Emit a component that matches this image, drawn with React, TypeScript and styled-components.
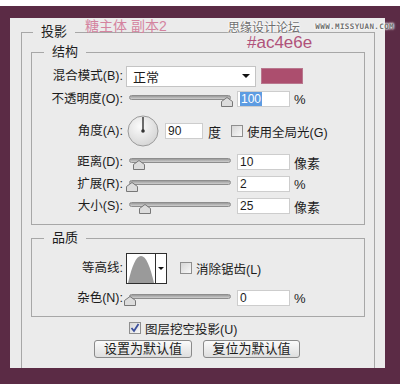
import React from "react";
import styled, { createGlobalStyle } from "styled-components";

const GlobalStyle = createGlobalStyle`
  html, body { margin: 0; padding: 0; }
  body {
    background: #5b2b45;
    font-family: "Liberation Sans", "Noto Sans CJK SC", sans-serif;
  }
`;

const Page = styled.div`
  position: relative;
  width: 400px;
  height: 384px;
  box-sizing: border-box;
  background: #5b2b45;
  border-top: 6px solid #ffffff;
  padding: 12px 0 0 10px;
  overflow: hidden;
`;

const Watermark = styled.div`
  position: absolute;
  right: 6px;
  top: 13px;
  width: 166px;
  display: flex;
  align-items: center;
  justify-content: space-between;
  color: #6f6f6f;
  text-shadow: 0 0 2px #fff, 0 0 2px #fff, 0 0 3px #fff;
  white-space: nowrap;
`;

const WmCn = styled.span`
  flex: none;
  font-family: "Noto Sans CJK SC", sans-serif;
  font-size: 12px;
  line-height: 15px;
`;

const WmEn = styled.span`
  flex: none;
  font-family: "DejaVu Sans Mono", monospace;
  font-size: 7.5px;
  letter-spacing: 0.4px;
  line-height: 15px;
  font-weight: bold;
`;

const Panel = styled.div`
  position: relative;
  width: 375px;
  height: 350px;
  box-sizing: border-box;
  background: #ebebeb;
  padding: 7px 0 0 11px;
  overflow: hidden;
  color: #1c1c1c;
  font-size: 12px;
`;

const LayerName = styled.div`
  position: absolute;
  left: 75px;
  top: 0px;
  font-size: 14px;
  line-height: 16px;
  color: #d4839f;
  white-space: nowrap;
`;

const HexNote = styled.div`
  position: absolute;
  left: 237px;
  top: 16px;
  font-size: 17px;
  line-height: 18px;
  color: #b0527a;
`;

const Group = styled.fieldset<{ $w: number; $pad: string }>`
  margin: 0;
  min-width: 0;
  width: ${({ $w }) => $w}px;
  box-sizing: border-box;
  border: 1px solid #a7a7a7;
  padding: ${({ $pad }) => $pad};
`;

const Legend = styled.legend<{ $ml: number }>`
  margin-left: ${({ $ml }) => $ml}px;
  padding: 0 8px;
  font-size: 13px;
  line-height: 14px;
`;

const Row = styled.div<{ $h: number }>`
  display: flex;
  align-items: center;
  height: ${({ $h }) => $h}px;
  white-space: nowrap;
  font-size: 12.5px;
`;

const Label = styled.span`
  flex: none;
  width: 91px;
  margin-right: 3px;
  text-align: right;
  font-size: 12.5px;
  line-height: 16px;
`;

const Select = styled.div`
  width: 130px;
  height: 21px;
  box-sizing: border-box;
  background: #fff;
  border: 1px solid #c4c4c4;
  display: flex;
  align-items: center;
  justify-content: space-between;
  padding: 0 5px 0 6px;
  font-size: 13px;
`;

const Arrow = styled.span`
  width: 0;
  height: 0;
  border-left: 4px solid transparent;
  border-right: 4px solid transparent;
  border-top: 4px solid #111;
`;

const Swatch = styled.div`
  width: 42px;
  height: 16px;
  margin-left: 5px;
  background: #ac4e6e;
  box-sizing: border-box;
  border: 1px solid #b9778e;
`;

const SliderWrap = styled.div`
  position: relative;
  flex: none;
  width: 102px;
  height: 16px;
  margin-left: 3px;
`;

const Track = styled.div`
  position: absolute;
  left: 0;
  right: 0;
  top: 4px;
  height: 3px;
  border: 1px solid #8d8d8d;
  border-radius: 3px;
  background: linear-gradient(#9a9a9a, #cfcfcf);
`;

const Thumb = styled.svg`
  position: absolute;
  top: 6px;
`;

const NumBox = styled.div<{ $w: number; $ml: number }>`
  flex: none;
  width: ${({ $w }) => $w}px;
  height: 16px;
  margin-left: ${({ $ml }) => $ml}px;
  box-sizing: border-box;
  background: #fff;
  border: 1px solid #cdcdcd;
  padding-left: 2px;
  font-size: 12px;
  line-height: 14px;
`;

const Picked = styled.span`
  background: #5d9ce2;
  color: #fff;
  padding: 0 1px;
`;

const Unit = styled.span<{ $ml: number }>`
  margin-left: ${({ $ml }) => $ml}px;
  font-size: 13px;
`;

const Box = styled.span<{ $ml: number }>`
  flex: none;
  display: inline-flex;
  align-items: center;
  justify-content: center;
  width: 12px;
  height: 12px;
  margin-left: ${({ $ml }) => $ml}px;
  margin-right: 4px;
  box-sizing: border-box;
  border: 1px solid #8e8e8e;
  background: linear-gradient(135deg, #d6d6d6, #f8f8f8);
`;

const Contour = styled.div`
  display: flex;
  width: 41px;
  height: 31px;
  box-sizing: border-box;
  border: 1px solid #2e2e2e;
  background: #fff;
`;

const ContourDrop = styled.div`
  flex: 1;
  display: flex;
  align-items: center;
  justify-content: center;
  border-left: 1px solid #2e2e2e;
`;

const SmallArrow = styled(Arrow)`
  border-left-width: 3px;
  border-right-width: 3px;
  border-top-width: 3px;
`;

const Stack = styled.div<{ $mt: number }>`
  margin-top: ${({ $mt }) => $mt}px;
`;

const ButtonBar = styled.div`
  display: flex;
  gap: 11px;
  margin-top: 4px;
  padding-left: 63px;
`;

const Button = styled.div<{ $w: number }>`
  width: ${({ $w }) => $w}px;
  height: 18px;
  box-sizing: border-box;
  border: 1px solid #8a8a8a;
  border-radius: 3px;
  background: linear-gradient(#fbfbfb, #dedede);
  font-size: 13px;
  line-height: 16px;
  text-align: center;
`;

const Slider = ({ at }: { at: number }) => (
  <SliderWrap>
    <Track />
    <Thumb width="12" height="10" viewBox="0 0 12 10" style={{ left: at - 6 }}>
      <path d="M0.5 4.5 L6 0.5 L11.5 4.5 L11.5 9.5 L0.5 9.5 Z" fill="#dcdcdc" stroke="#777" />
    </Thumb>
  </SliderWrap>
);

const Dial = () => (
  <svg width="32" height="32" viewBox="0 0 32 32" style={{ marginLeft: 1, flex: "none" }}>
    <defs>
      <radialGradient id="dialFill" cx="40%" cy="35%" r="70%">
        <stop offset="0" stopColor="#fbfbfb" />
        <stop offset="1" stopColor="#d4d4d4" />
      </radialGradient>
    </defs>
    <circle cx="16" cy="16" r="15" fill="url(#dialFill)" stroke="#9a9a9a" />
    <line x1="16" y1="16" x2="16" y2="2" stroke="#333" strokeWidth="1.4" />
    <circle cx="16" cy="16" r="1.8" fill="#333" />
  </svg>
);

const Tick = () => (
  <svg width="10" height="10" viewBox="0 0 10 10">
    <path d="M1.5 5 L4 8 L8.5 1" fill="none" stroke="#3a4f9c" strokeWidth="1.8" />
  </svg>
);

const sliders = [
  { label: "距离(D):", at: 10, value: "10", unit: "像素" },
  { label: "扩展(R):", at: 3, value: "2", unit: "%" },
  { label: "大小(S):", at: 16, value: "25", unit: "像素" },
];

export default function App() {
  return (
    <Page>
      <GlobalStyle />
      <Panel>
        <LayerName>糖主体 副本2</LayerName>
        <HexNote>#ac4e6e</HexNote>
        <Group $w={354} $pad="6px 9px 40px 9px">
          <Legend $ml={2}>投影</Legend>
          <Group $w={334} $pad="5px 0 8px 0">
            <Legend $ml={12}>结构</Legend>
            <Row $h={24}>
              <Label>混合模式(B):</Label>
              <Select>
                正常
                <Arrow />
              </Select>
              <Swatch />
            </Row>
            <Row $h={22}>
              <Label>不透明度(O):</Label>
              <Slider at={98} />
              <NumBox $w={53} $ml={6}>
                <Picked>100</Picked>
              </NumBox>
              <Unit $ml={4}>%</Unit>
            </Row>
            <Row $h={42}>
              <Label>角度(A):</Label>
              <Dial />
              <NumBox $w={38} $ml={6}>90</NumBox>
              <Unit $ml={5}>度</Unit>
              <Box $ml={10} />
              使用全局光(G)
            </Row>
            {sliders.map((s, i) => (
              <Row key={s.label} $h={i === 1 ? 24 : 20}>
                <Label>{s.label}</Label>
                <Slider at={s.at} />
                <NumBox $w={53} $ml={6}>{s.value}</NumBox>
                <Unit $ml={4}>{s.unit}</Unit>
              </Row>
            ))}
          </Group>
          <Stack $mt={6}>
            <Group $w={334} $pad="5px 0 6px 0">
              <Legend $ml={12}>品质</Legend>
              <Row $h={36}>
                <Label>等高线:</Label>
                <Contour>
                  <svg width="28" height="29" viewBox="0 0 28 29">
                    <path d="M1 29 C5 12 9 2 14 2 C19 2 23 12 27 29 Z" fill="#9a9a9a" />
                  </svg>
                  <ContourDrop>
                    <SmallArrow />
                  </ContourDrop>
                </Contour>
                <Box $ml={13} />
                消除锯齿(L)
              </Row>
              <Row $h={24}>
                <Label>杂色(N):</Label>
                <Slider at={1} />
                <NumBox $w={53} $ml={6}>0</NumBox>
                <Unit $ml={4}>%</Unit>
              </Row>
            </Group>
          </Stack>
          <Row $h={16} style={{ marginTop: 3 }}>
            <Box $ml={98}>
              <Tick />
            </Box>
            图层挖空投影(U)
          </Row>
          <ButtonBar>
            <Button $w={98}>设置为默认值</Button>
            <Button $w={97}>复位为默认值</Button>
          </ButtonBar>
        </Group>
      </Panel>
      <Watermark>
        <WmCn>思缘设计论坛</WmCn>
        <WmEn>WWW.MISSYUAN.COM</WmEn>
      </Watermark>
    </Page>
  );
}
